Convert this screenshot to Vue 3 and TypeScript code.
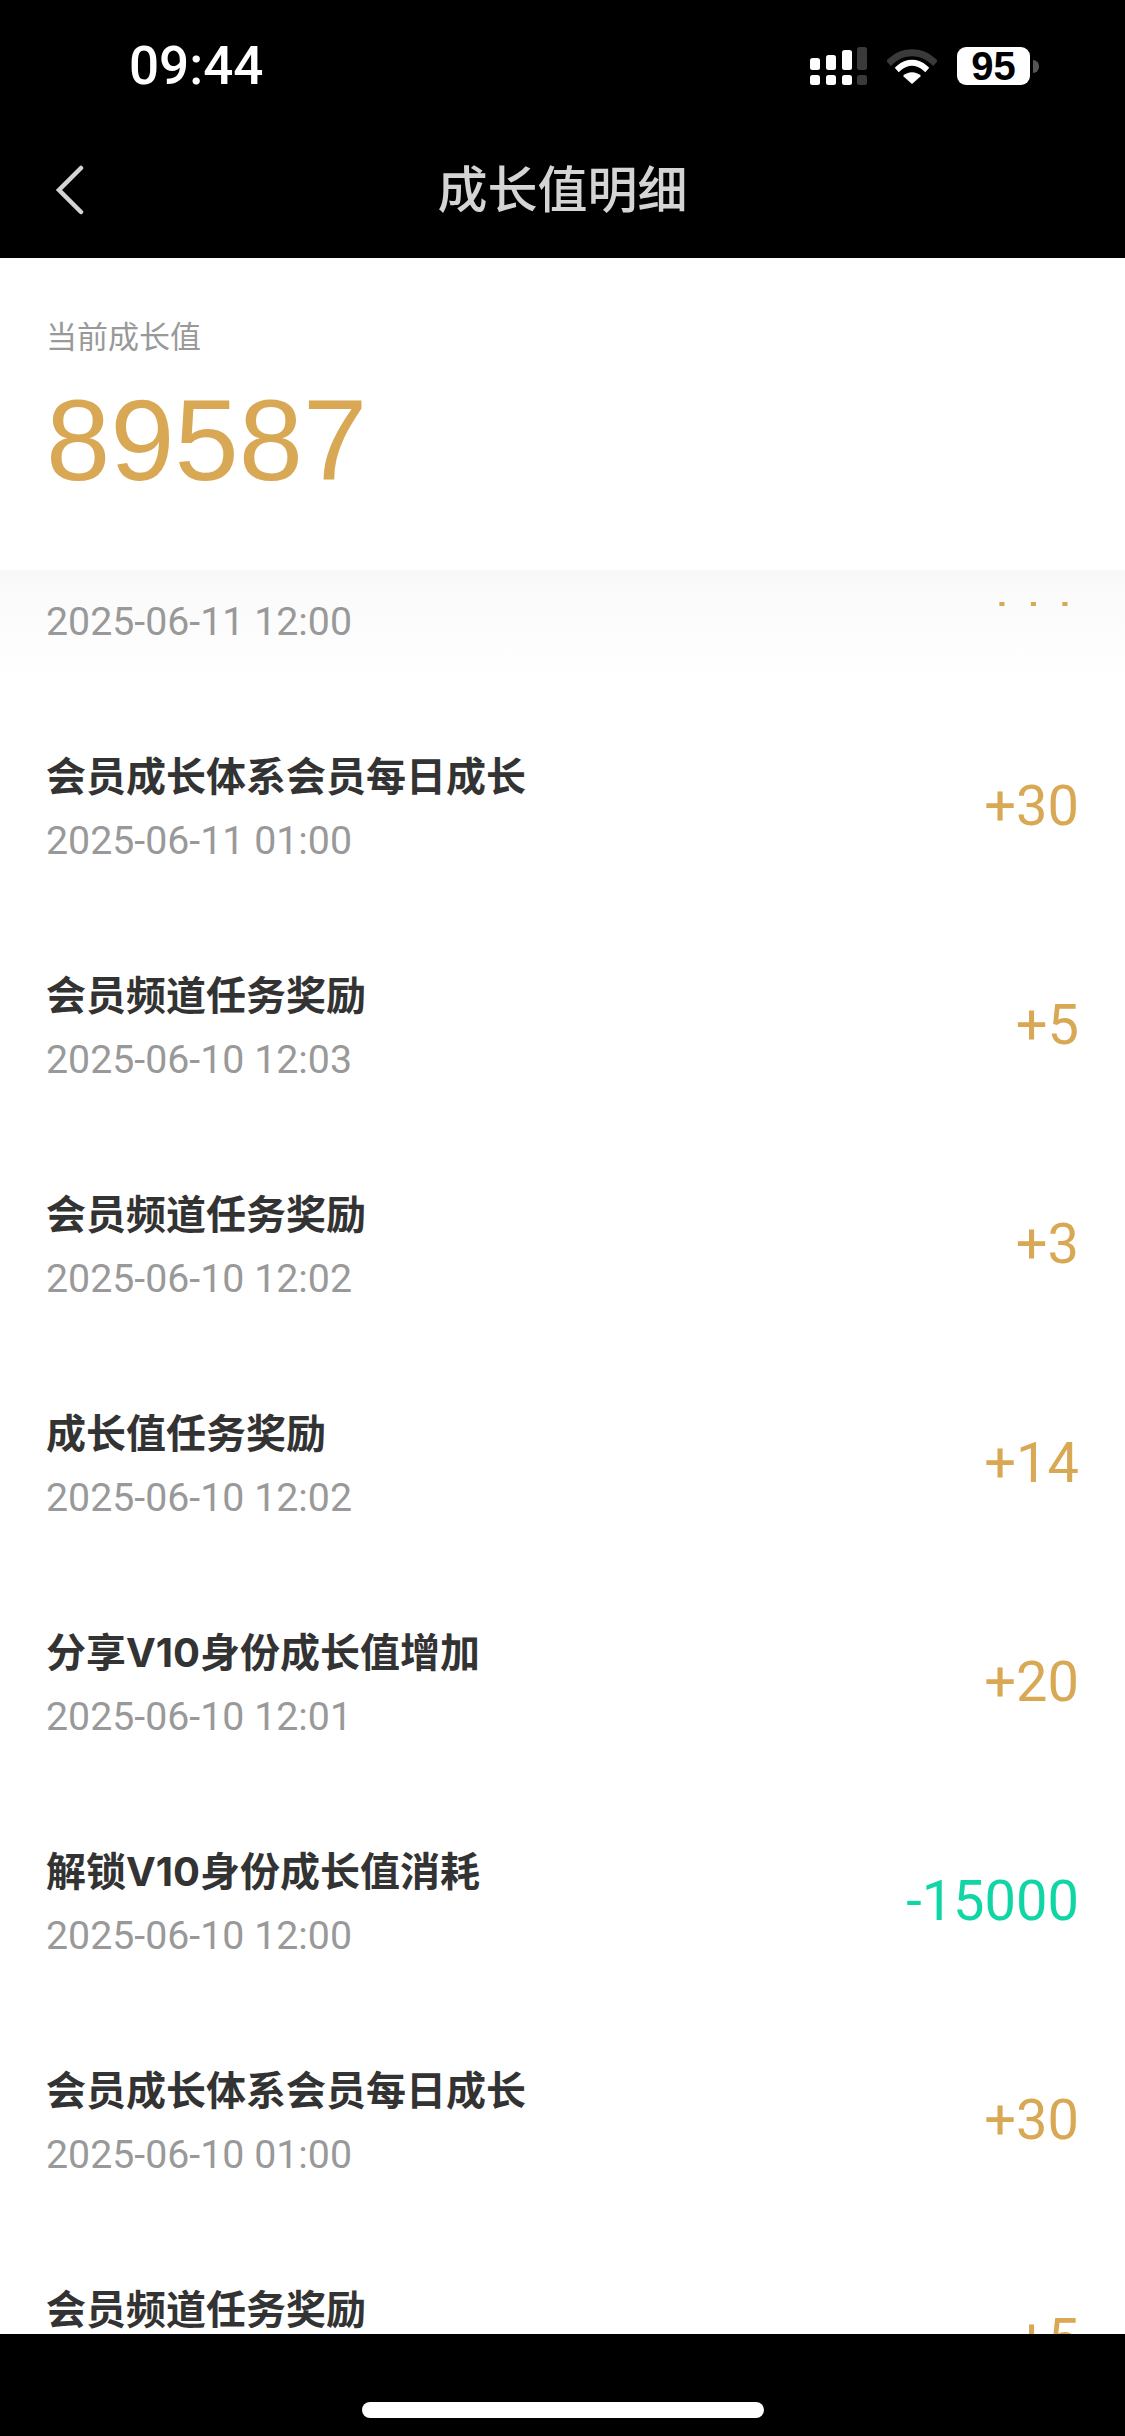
<script setup lang="ts">
interface Row {
  title: string
  time: string
  amount: string
  minus?: boolean
}

const rows: Row[] = [
  { title: "会员频道任务奖励", time: "2025-06-11 12:00", amount: "+111" },
  { title: "会员成长体系会员每日成长", time: "2025-06-11 01:00", amount: "+30" },
  { title: "会员频道任务奖励", time: "2025-06-10 12:03", amount: "+5" },
  { title: "会员频道任务奖励", time: "2025-06-10 12:02", amount: "+3" },
  { title: "成长值任务奖励", time: "2025-06-10 12:02", amount: "+14" },
  { title: "分享V10身份成长值增加", time: "2025-06-10 12:01", amount: "+20" },
  { title: "解锁V10身份成长值消耗", time: "2025-06-10 12:00", amount: "-15000", minus: true },
  { title: "会员成长体系会员每日成长", time: "2025-06-10 01:00", amount: "+30" },
  { title: "会员频道任务奖励", time: "2025-06-10 00:30", amount: "+5" },
]
</script>

<template>
  <div class="screen">
    <header class="top">
      <div class="status">
        <span class="clock">09:44</span>
        <div class="status-icons">
          <svg width="58" height="38" viewBox="0 0 58 38">
            <g fill="#fff">
              <rect x="1" y="11" width="10" height="12" rx="2.5" />
              <rect x="17" y="8" width="10" height="15" rx="2.5" />
              <rect x="33" y="3" width="10" height="20" rx="2.5" />
              <rect x="1" y="28" width="10" height="10" rx="2.5" />
              <rect x="17" y="28" width="10" height="10" rx="2.5" />
              <rect x="33" y="28" width="10" height="10" rx="2.5" />
            </g>
            <g fill="#3a3a3a">
              <rect x="48" y="0" width="10" height="23" rx="2.5" />
              <rect x="48" y="28" width="10" height="10" rx="2.5" />
            </g>
          </svg>
          <svg width="50" height="36" viewBox="0 0 50 36">
            <path d="M4 13 C16 2 34 2 46 13" fill="none" stroke="#3a3a3a" stroke-width="7" stroke-linecap="square" />
            <path d="M12 20 C20 13 30 13 38 20" fill="none" stroke="#fff" stroke-width="6" stroke-linecap="square" />
            <path d="M16 28 C21 23 29 23 34 28 L25 36 Z" fill="#fff" />
          </svg>
          <div class="battery">
            <span class="battery-body">95</span>
            <i class="battery-cap"></i>
          </div>
        </div>
      </div>
      <div class="nav">
        <svg class="back" width="30" height="50" viewBox="0 0 30 50">
          <path d="M27 3 L5 25 L27 47" fill="none" stroke="#d4d4d4" stroke-width="4.5" stroke-linecap="round" />
        </svg>
        <h1 class="nav-title">成长值明细</h1>
      </div>
    </header>

    <section class="summary">
      <div class="summary-label">当前成长值</div>
      <div class="summary-value">89587</div>
    </section>

    <main class="list-wrap">
      <div class="list">
        <div v-for="(row, i) in rows" :key="i" class="row">
          <div>
            <div class="row-title">{{ row.title }}</div>
            <div class="row-time">{{ row.time }}</div>
          </div>
          <div class="row-amount" :class="{ minus: row.minus }">{{ row.amount }}</div>
        </div>
      </div>
      <div class="fade"></div>
    </main>

    <footer class="bottom">
      <div class="home-bar"></div>
    </footer>
  </div>
</template>

<style>
html, body { margin: 0; background: #000; }
</style>

<style scoped>
.screen { width: 1125px; height: 2436px; display: flex; flex-direction: column; background: #fff; overflow: hidden; font-family: "Liberation Sans", "Noto Sans CJK SC", sans-serif; }
.top { height: 258px; flex: none; background: #000; color: #fff; }
.status { height: 132px; display: flex; justify-content: space-between; align-items: center; padding: 0 86px 0 129px; }
.clock { font-family: Roboto, "Liberation Sans", sans-serif; font-size: 53px; font-weight: 500; }
.status-icons { display: flex; align-items: center; gap: 20px; }
.battery { display: flex; align-items: center; gap: 3px; }
.battery-body { width: 73px; height: 38px; border-radius: 9px; background: #fff; color: #000; font-size: 40px; font-weight: 700; line-height: 39px; text-align: center; }
.battery-cap { width: 6px; height: 13px; border-radius: 0 7px 7px 0; background: #555; }
.nav { height: 126px; position: relative; display: flex; align-items: center; justify-content: center; }
.back { position: absolute; left: 54px; top: 33px; }
.nav-title { margin: 0 0 18px; font-size: 50px; font-weight: 500; color: #d4d4d4; }
.summary { height: 312px; flex: none; box-sizing: border-box; padding: 58px 46px 0; }
.summary-label { font-size: 31px; line-height: 44px; color: #999; }
.summary-value { margin-top: 15px; font-size: 115.5px; line-height: 130px; color: #d9a855; }
.list-wrap { flex: 1; position: relative; overflow: hidden; background: linear-gradient(#f8f8f8, #fbfbfb 32px, #fff 110px); }
.list { margin-top: -91px; }
.row { height: 219px; box-sizing: border-box; padding: 0 46px; display: flex; justify-content: space-between; align-items: center; }
.row-title { font-family: Inter, "Noto Sans CJK SC", sans-serif; font-size: 40px; line-height: 54px; font-weight: 700; color: #333; }
.row-time { margin-top: 13px; font-family: Roboto, sans-serif; font-size: 39.3px; line-height: 48px; color: #999; }
.row-amount { margin-bottom: 4px; font-family: Roboto, sans-serif; font-size: 56px; color: #d9a855; }
.row-amount.minus { color: #0fd6a4; }
.fade { position: absolute; left: 0; right: 0; top: 0; height: 32px; background: linear-gradient(#f8f8f8, #fbfbfb); pointer-events: none; }
.bottom { height: 102px; flex: none; background: #000; display: flex; justify-content: center; padding-top: 68px; box-sizing: border-box; }
.home-bar { width: 402px; height: 16px; border-radius: 8px; background: #fff; }
</style>
